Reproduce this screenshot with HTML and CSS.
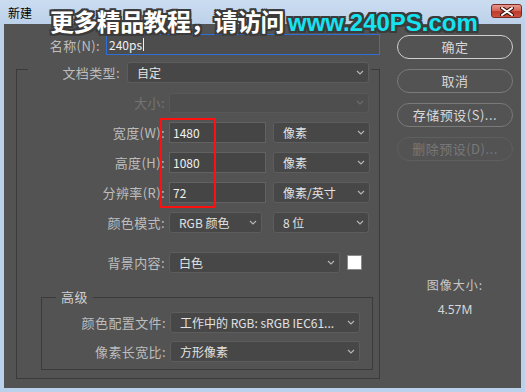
FILE: index.html
```html
<!DOCTYPE html>
<html lang="zh">
<head>
<meta charset="utf-8">
<title>新建</title>
<link rel="stylesheet" href="styles.css">
</head>
<body>
<div class="window">
  <div class="titlebar">
    <span class="title">新建</span>
    <button class="close" aria-label="关闭">
      <svg width="14" height="9" viewBox="0 0 14 9"><path d="M2 1 L12 8 M12 1 L2 8" stroke="#3a1410" stroke-width="4" stroke-linecap="round"/><path d="M2 1 L12 8 M12 1 L2 8" stroke="#ffffff" stroke-width="2" stroke-linecap="round"/></svg>
    </button>
  </div>
  <div class="watermark"><span class="wm-cn">更多精品教程，请访问</span><span class="wm-url">www.240PS.com</span></div>
  <div class="client">
    <div class="main">
      <div class="name-row">
        <span class="name-lbl">名称(N):</span>
        <div class="name-input"><span class="name-text">240ps</span><span class="caret"></span></div>
      </div>
      <div class="group">
        <div class="group-head">
          <span class="head-lbl">文档类型:</span>
          <div class="select w-preset"><span>自定</span><svg class="chev" width="8" height="5" viewBox="0 0 8 5"><path d="M1 1 L4 4 L7 1" fill="none" stroke="#b5b5b5" stroke-width="1.2"/></svg></div>
        </div>
        <div class="rows">
          <div class="row">
            <span class="lbl dim">大小:</span>
            <div class="select disabled w-full"><span></span><svg class="chev" width="8" height="5" viewBox="0 0 8 5"><path d="M1 1 L4 4 L7 1" fill="none" stroke="#6c6c6c" stroke-width="1.2"/></svg></div>
          </div>
          <div class="row">
            <span class="lbl">宽度(W):</span>
            <div class="input">1480</div>
            <div class="select w-unit"><span>像素</span><svg class="chev" width="8" height="5" viewBox="0 0 8 5"><path d="M1 1 L4 4 L7 1" fill="none" stroke="#b5b5b5" stroke-width="1.2"/></svg></div>
          </div>
          <div class="row">
            <span class="lbl">高度(H):</span>
            <div class="input">1080</div>
            <div class="select w-unit"><span>像素</span><svg class="chev" width="8" height="5" viewBox="0 0 8 5"><path d="M1 1 L4 4 L7 1" fill="none" stroke="#b5b5b5" stroke-width="1.2"/></svg></div>
          </div>
          <div class="row">
            <span class="lbl">分辨率(R):</span>
            <div class="input">72</div>
            <div class="select w-unit"><span>像素/英寸</span><svg class="chev" width="8" height="5" viewBox="0 0 8 5"><path d="M1 1 L4 4 L7 1" fill="none" stroke="#b5b5b5" stroke-width="1.2"/></svg></div>
          </div>
          <div class="row">
            <span class="lbl">颜色模式:</span>
            <div class="select w-mode"><span>RGB 颜色</span><svg class="chev" width="8" height="5" viewBox="0 0 8 5"><path d="M1 1 L4 4 L7 1" fill="none" stroke="#b5b5b5" stroke-width="1.2"/></svg></div>
            <div class="select w-bits"><span>8 位</span><svg class="chev" width="8" height="5" viewBox="0 0 8 5"><path d="M1 1 L4 4 L7 1" fill="none" stroke="#b5b5b5" stroke-width="1.2"/></svg></div>
          </div>
          <div class="row row-bg">
            <span class="lbl">背景内容:</span>
            <div class="select w-bg"><span>白色</span><svg class="chev" width="8" height="5" viewBox="0 0 8 5"><path d="M1 1 L4 4 L7 1" fill="none" stroke="#b5b5b5" stroke-width="1.2"/></svg></div>
            <span class="swatch"></span>
          </div>
        </div>
        <div class="adv">
          <div class="adv-head">高级</div>
          <div class="adv-rows">
            <div class="row">
              <span class="lbl lbl-adv">颜色配置文件:</span>
              <div class="select w-adv"><span>工作中的 RGB: sRGB IEC61...</span><svg class="chev" width="8" height="5" viewBox="0 0 8 5"><path d="M1 1 L4 4 L7 1" fill="none" stroke="#b5b5b5" stroke-width="1.2"/></svg></div>
            </div>
            <div class="row">
              <span class="lbl lbl-adv">像素长宽比:</span>
              <div class="select w-adv"><span>方形像素</span><svg class="chev" width="8" height="5" viewBox="0 0 8 5"><path d="M1 1 L4 4 L7 1" fill="none" stroke="#b5b5b5" stroke-width="1.2"/></svg></div>
            </div>
          </div>
        </div>
      </div>
      <div class="mark"></div>
    </div>
    <div class="side">
      <button class="btn btn-default">确定</button>
      <button class="btn">取消</button>
      <button class="btn">存储预设(S)...</button>
      <button class="btn btn-disabled">删除预设(D)...</button>
      <div class="info">
        <div class="info-title">图像大小:</div>
        <div class="info-value">4.57M</div>
      </div>
    </div>
  </div>
</div>
</body>
</html>
```

FILE: styles.css
```css
* { box-sizing: border-box; }

html, body {
  margin: 0;
  padding: 0;
}

body {
  width: 525px;
  height: 392px;
  overflow: hidden;
  font-family: "Noto Sans CJK SC", "Noto Sans", sans-serif;
}

.window {
  position: relative;
  width: 525px;
  height: 392px;
  background: linear-gradient(#cbdcf0 0px, #bcd2ea 24px, #b9d1ea 100%);
  display: flex;
  flex-direction: column;
}

.titlebar {
  height: 24px;
  display: flex;
  align-items: flex-start;
  flex: none;
}

.title {
  margin-left: 8px;
  margin-top: 5px;
  font-size: 12px;
  line-height: 15px;
  color: #000;
}

.close {
  margin-left: auto;
  margin-right: 3px;
  margin-top: 4px;
  width: 31px;
  height: 14px;
  padding: 0;
  border: 1px solid #7a2a22;
  border-radius: 3px;
  background: linear-gradient(#e69a8f 0%, #d4675a 45%, #bf3b2c 55%, #c9503f 100%);
  display: flex;
  align-items: center;
  justify-content: center;
}

.watermark {
  position: absolute;
  left: 50px;
  top: 10px;
  white-space: nowrap;
  font-weight: 700;
  font-size: 24px;
  line-height: 22px;
  text-shadow:
    -2px -2px 0 #3b3b3b, 2px -2px 0 #3b3b3b, -2px 2px 0 #3b3b3b, 2px 2px 0 #3b3b3b,
    0 -2px 0 #3b3b3b, 0 2px 0 #3b3b3b, -2px 0 0 #3b3b3b, 2px 0 0 #3b3b3b;
  z-index: 5;
}

.wm-cn {
  color: #ffffff;
  font-family: "Noto Sans CJK SC", sans-serif;
  letter-spacing: -0.6px;
}

.wm-url {
  color: #16e3f2;
  font-family: "Liberation Sans", Arial, sans-serif;
  margin-left: 4px;
}

.client {
  flex: none;
  margin: 0 4px;
  height: 364px;
  background: #535353;
  display: flex;
  padding-top: 10px;
}

.main {
  position: relative;
  width: 376px;
  flex: none;
}

.name-row {
  display: flex;
  align-items: center;
  height: 21px;
}

.name-lbl {
  width: 96px;
  text-align: right;
  font-size: 13px;
  line-height: 15px;
  letter-spacing: 0.4px;
  color: #bdbdbd;
  padding-top: 1px;
}

.name-input {
  margin-left: 6px;
  width: 274px;
  height: 21px;
  border: 1px solid #2d6fd6;
  background: #4d4d4d;
  color: #f0f0f0;
  font-size: 12px;
  padding-left: 2px;
  display: flex;
  align-items: center;
}

.name-text {
  line-height: 14px;
}

.caret {
  display: inline-block;
  width: 1px;
  height: 13px;
  background: #f0f0f0;
  margin-left: 1px;
}

.group {
  margin-top: 14px;
  margin-left: 12px;
  width: 364px;
  border: 1px solid #3b3b3b;
  padding-bottom: 8px;
  display: flex;
  flex-direction: column;
}

.group-head {
  align-self: flex-start;
  margin-top: -8px;
  margin-left: 11px;
  padding-right: 2px;
  background: #535353;
  display: flex;
  align-items: center;
  height: 21px;
}

.head-lbl {
  width: 92px;
  text-align: right;
  font-size: 13px;
  letter-spacing: 0.4px;
  color: #bdbdbd;
  margin-right: 7px;
}

.rows {
  margin-top: 9px;
  display: flex;
  flex-direction: column;
  gap: 9px;
}

.row {
  display: flex;
  align-items: center;
  height: 21px;
}

.row-bg {
  margin-top: 10px;
}

.lbl {
  width: 148px;
  margin-right: 4px;
  text-align: right;
  font-size: 13px;
  letter-spacing: 0.4px;
  color: #bdbdbd;
  white-space: nowrap;
}

.lbl.dim {
  color: #747474;
}

.lbl-adv {
  width: 124px;
}

.select {
  height: 21px;
  border: 1px solid #5d5d5d;
  border-radius: 3px;
  background: #474747;
  color: #e2e2e2;
  font-size: 12px;
  padding: 0 4px 0 9px;
  display: flex;
  align-items: center;
  justify-content: space-between;
  white-space: nowrap;
}

.select.disabled {
  background: #4e4e4e;
  border-color: #585858;
  height: 20px;
}

.chev {
  flex: none;
}

.input {
  width: 97px;
  height: 21px;
  border: 1px solid #626262;
  background: #454545;
  color: #f0f0f0;
  font-size: 12px;
  line-height: 19px;
  padding-left: 3px;
}

.w-preset { width: 242px; }
.w-full { width: 200px; }
.w-unit { width: 97px; margin-left: 7px; }
.w-mode { width: 93px; }
.w-bits { width: 96px; margin-left: 11px; }
.w-bg { width: 171px; }
.w-adv { width: 190px; }

.swatch {
  margin-left: 7px;
  width: 15px;
  height: 15px;
  background: #ffffff;
  border: 1px solid #8a8a8a;
}

.adv {
  margin-top: 24px;
  margin-left: 24px;
  width: 332px;
  border: 1px solid #3b3b3b;
  padding-bottom: 7px;
  display: flex;
  flex-direction: column;
}

.adv-head {
  align-self: flex-start;
  margin-top: -9px;
  margin-left: 14px;
  padding: 0 5px;
  background: #535353;
  font-size: 13px;
  line-height: 16px;
  letter-spacing: 0.5px;
  color: #cfcfcf;
}

.adv-rows {
  margin-top: 7px;
  display: flex;
  flex-direction: column;
  gap: 8px;
}

.mark {
  position: absolute;
  left: 156px;
  top: 84px;
  width: 56px;
  height: 90px;
  border: 2px solid #ff1010;
}

.side {
  margin-left: 17px;
  padding-top: 1px;
  width: 116px;
  display: flex;
  flex-direction: column;
  gap: 10px;
}

.btn {
  width: 116px;
  height: 24px;
  border: 1px solid #7a7a7a;
  border-radius: 12px;
  background: #535353;
  color: #d8d8d8;
  font-family: "Noto Sans CJK SC", "Noto Sans", sans-serif;
  font-size: 13px;
  letter-spacing: 0.5px;
  padding: 0;
  line-height: 20px;
}

.btn-default {
  border: 1.5px solid #cfcfcf;
}

.btn-disabled {
  border-color: #5f5f5f;
  color: #787878;
}

.info {
  margin-top: 106px;
  text-align: center;
  color: #c8c8c8;
  font-size: 12px;
}

.info-title {
  line-height: 16px;
  letter-spacing: 1px;
}

.info-value {
  margin-top: 9px;
  line-height: 16px;
  font-family: "Noto Sans", sans-serif;
  color: #d8d8d8;
}
```
